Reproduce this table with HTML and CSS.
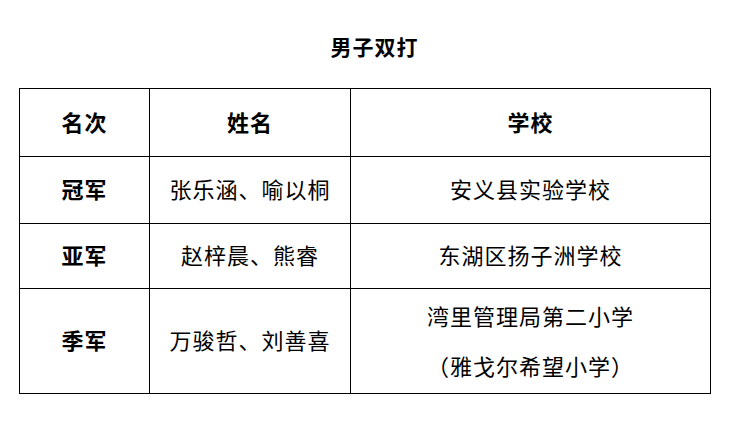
FILE: index.html
```html
<!DOCTYPE html>
<html lang="zh-CN">
<head>
<meta charset="utf-8">
<title>男子双打</title>
<link rel="stylesheet" href="styles.css">
</head>
<body>
<div class="page">
  <h1 class="title">男子双打</h1>
  <table class="results">
    <colgroup>
      <col class="c-rank">
      <col class="c-name">
      <col class="c-school">
    </colgroup>
    <thead>
      <tr class="r-head">
        <th>名次</th>
        <th>姓名</th>
        <th>学校</th>
      </tr>
    </thead>
    <tbody>
      <tr class="r-1">
        <th>冠军</th>
        <td>张乐涵、喻以桐</td>
        <td>安义县实验学校</td>
      </tr>
      <tr class="r-2">
        <th>亚军</th>
        <td>赵梓晨、熊睿</td>
        <td>东湖区扬子洲学校</td>
      </tr>
      <tr class="r-3">
        <th>季军</th>
        <td>万骏哲、刘善喜</td>
        <td class="two-line">湾里管理局第二小学<br>（雅戈尔希望小学）</td>
      </tr>
    </tbody>
  </table>
</div>
</body>
</html>
```

FILE: styles.css
```css
html, body {
  margin: 0;
  padding: 0;
  background: #ffffff;
}

body {
  font-family: "Noto Sans CJK SC", "Liberation Serif", sans-serif;
  color: #000000;
}

.page {
  padding-left: 19px;
  width: 691px;
}

.title {
  margin: 0;
  padding: 31px 0 0 20px;
  height: 88px;
  box-sizing: border-box;
  text-align: center;
  font-size: 21px;
  line-height: 30px;
  font-weight: bold;
  letter-spacing: 1px;
}

.results {
  border-collapse: collapse;
  table-layout: fixed;
  width: 691px;
}

.c-rank { width: 130px; }
.c-name { width: 201px; }
.c-school { width: 360px; }

.results th,
.results td {
  border: 1px solid #000000;
  padding: 0 0 4px 0;
  text-align: center;
  vertical-align: middle;
  font-size: 22px;
  letter-spacing: 1px;
  line-height: 30px;
}

.results th {
  font-weight: bold;
}

.results td {
  font-weight: normal;
}

.r-head { height: 68px; }
.r-1 { height: 67px; }
.r-2 { height: 65px; }
.r-3 { height: 105px; }

.results td.two-line {
  padding-bottom: 3px;
  line-height: 50px;
}
```
